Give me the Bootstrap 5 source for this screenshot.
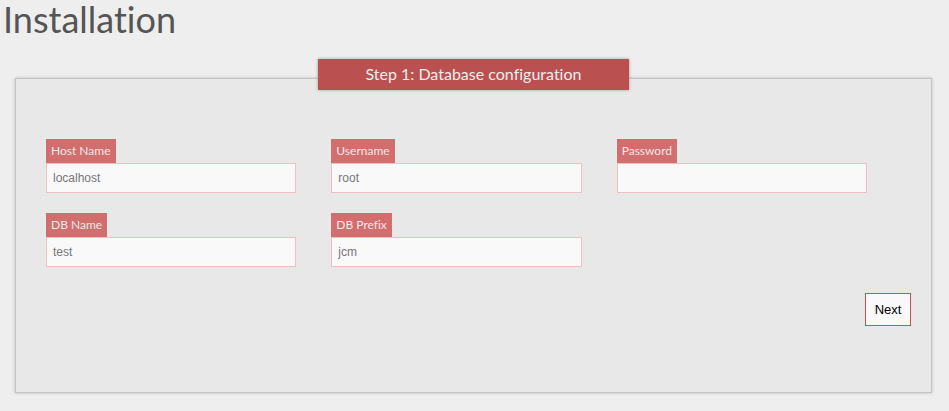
<!DOCTYPE html>
<html lang="en">
<head>
<meta charset="utf-8">
<meta name="viewport" content="width=device-width, initial-scale=1">
<title>Installation</title>
<link href="https://cdn.jsdelivr.net/npm/bootstrap@5.3.0/dist/css/bootstrap.min.css" rel="stylesheet">
<style>
  body { background: #eee; color: #555; font-family: Lato, sans-serif; font-variant-ligatures: none; }
  .page-title { font-size: 36px; line-height: 38px; font-weight: 400; padding-left: 3px; margin-bottom: 40px; }
  .step-panel { margin: 0 17px 17px 15px; padding-bottom: 66px; background: #e8e8e8; border: 1px solid #c4c4c4; box-shadow: 0 0 3px #bbb; }
  .step-title { width: 34%; margin: -20px 33% 49px; padding-bottom: 2px; background: #ba5150; color: #eee; font-size: 16px; line-height: 29px; box-shadow: 0 0 3px #999; }
  .step-fields { clear: both; padding: 0 29px 0 30px; row-gap: 20px; }
  .field { padding-right: 35px; }
  .field-label { background: #d26e6e; color: #f4e6e6; font-size: 12px; line-height: 24px; padding: 0 5px; }
  .field-input { height: 30px; padding: 0 6px; font: 12px "Liberation Sans", Arial, sans-serif; color: #777; background: #f9f9f9; border-color: #edc1c1; }
  .step-actions { padding: 26px 20px 0; }
  .btn-next { width: 46px; font: 13px/15px "Liberation Sans", Arial, sans-serif; color: #000; background: #f9f9f9; border-color: #cf4f55; padding: 8px 0; }
</style>
<script defer src="https://cdn.jsdelivr.net/npm/bootstrap@5.3.0/dist/js/bootstrap.bundle.min.js"></script>
</head>
<body>
<h1 class="page-title">Installation</h1>
<form>
  <fieldset class="step-panel">
    <legend class="step-title text-center">Step 1: Database configuration</legend>
    <div class="step-fields row g-0">
      <div class="field col-4">
        <label class="field-label d-table" for="host">Host Name</label>
        <input class="field-input form-control rounded-0" type="text" id="host" value="localhost">
      </div>
      <div class="field col-4">
        <label class="field-label d-table" for="user">Username</label>
        <input class="field-input form-control rounded-0" type="text" id="user" value="root">
      </div>
      <div class="field col-4">
        <label class="field-label d-table" for="pass">Password</label>
        <input class="field-input form-control rounded-0" type="password" id="pass">
      </div>
      <div class="field col-4">
        <label class="field-label d-table" for="dbname">DB Name</label>
        <input class="field-input form-control rounded-0" type="text" id="dbname" value="test">
      </div>
      <div class="field col-4">
        <label class="field-label d-table" for="prefix">DB Prefix</label>
        <input class="field-input form-control rounded-0" type="text" id="prefix" value="jcm">
      </div>
    </div>
    <div class="step-actions d-flex justify-content-end">
      <button class="btn btn-next rounded-0" type="button">Next</button>
    </div>
  </fieldset>
</form>
</body>
</html>
